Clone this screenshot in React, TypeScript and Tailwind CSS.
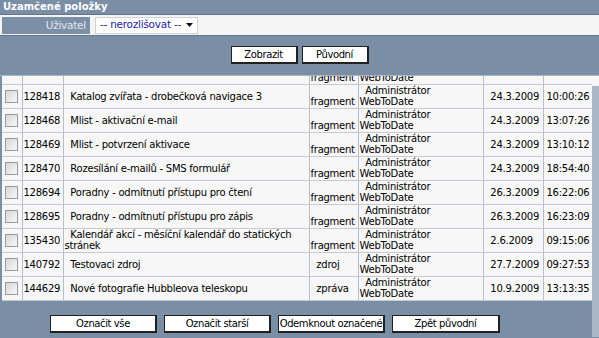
import * as React from "react";

type Row = {
  id: string;
  name: string;
  type: string;
  date: string;
  time: string;
};

const rows: Row[] = [
  { id: "128418", name: "Katalog zvířata - drobečková navigace 3", type: "fragment", date: "24.3.2009", time: "10:00:26" },
  { id: "128468", name: "Mlist - aktivační e-mail", type: "fragment", date: "24.3.2009", time: "13:07:26" },
  { id: "128469", name: "Mlist - potvrzení aktivace", type: "fragment", date: "24.3.2009", time: "13:10:12" },
  { id: "128470", name: "Rozesílání e-mailů - SMS formulář", type: "fragment", date: "24.3.2009", time: "18:54:40" },
  { id: "128694", name: "Poradny - odmítnutí přístupu pro čtení", type: "fragment", date: "26.3.2009", time: "16:22:06" },
  { id: "128695", name: "Poradny - odmítnutí přístupu pro zápis", type: "fragment", date: "26.3.2009", time: "16:23:09" },
  { id: "135430", name: "Kalendář akcí - měsíční kalendář do statických stránek", type: "fragment", date: "2.6.2009", time: "09:15:06" },
  { id: "140792", name: "Testovaci zdroj", type: "zdroj", date: "27.7.2009", time: "09:27:53" },
  { id: "144629", name: "Nové fotografie Hubbleova teleskopu", type: "zpráva", date: "10.9.2009", time: "13:13:35" },
];

const td = "border-l border-b border-l-[#b3bfcd] border-b-[#c6cacf] align-middle p-0";

function Checkbox() {
  return (
    <span className="mx-auto block h-[13px] w-[13px] border border-[#9a9a9a] bg-gradient-to-br from-[#d6d6d6] to-[#fafafa]" />
  );
}

function Button({ children, className }: { children: React.ReactNode; className: string }) {
  return (
    <button
      className={
        "h-[18px] whitespace-nowrap border border-[#202020] border-r-2 border-b-2 bg-white text-[10px] leading-none tracking-[-0.4px] text-black " +
        className
      }
    >
      {children}
    </button>
  );
}

function TableRow({ row, hidden }: { row: Row; hidden?: boolean }) {
  return (
    <tr className="h-[24px] bg-[#f7f7f7] leading-[11px]">
      <td className={td + " border-l-0"}>{hidden ? null : <Checkbox />}</td>
      <td className={td + " pl-px"}>{row.id}</td>
      <td className={td + " pl-px"}>{row.name ? "\u00a0 " + row.name : ""}</td>
      <td className={td + " pl-px"}>{"\u00a0 " + row.type}</td>
      <td className={td + " pl-px"}>{"\u00a0 Administrátor WebToDate"}</td>
      <td className={td + " pl-px"}>{row.date ? "\u00a0 " + row.date : ""}</td>
      <td className={td + " pl-[3px]"}>{row.time}</td>
    </tr>
  );
}

export default function App() {
  return (
    <div className="h-[338px] w-[599px] overflow-hidden bg-[#7a8ea6] font-['DejaVu_Sans',sans-serif] text-[10px] tracking-[-0.25px] text-black">
      <div className="h-[15px] border-b border-[#62748c] pl-[3px] text-[10px] font-bold leading-[14px] tracking-normal text-white">
        Uzamčené položky
      </div>

      <div className="flex h-[20px] items-center bg-[#f5f5f5] pl-[2px]">
        <div className="h-[17px] w-[88px] bg-[#7b8fa7] pr-[4px] text-right text-[10.5px] leading-[17px] text-[#e3e8ee]">
          Uživatel
        </div>
        <div className="ml-[5px] flex h-[17px] w-[103px] items-center justify-between border border-[#cfd3d9] bg-white pl-[4px] pr-[4px] text-[10.5px] text-[#1c1ca8]">
          <span>-- nerozlišovat --</span>
          <svg width="7" height="4" viewBox="0 0 7 4">
            <path d="M0 0h7L3.5 4z" fill="#111" />
          </svg>
        </div>
      </div>

      <div className="flex h-[41px] justify-center gap-[4px] border-t border-b border-t-[#62748c] border-b-[#a9b6c6] pt-[10px]">
        <Button className="w-[67px]">Zobrazit</Button>
        <Button className="w-[67px]">Původní</Button>
      </div>

      <div className="flex h-[261px]">
        <div className="flex w-[592px] flex-col">
          <div className="h-[225px] overflow-hidden pl-[2px]">
            <table className="-mt-[16px] w-[590px] table-fixed border-collapse">
              <colgroup>
                <col className="w-[20px]" />
                <col className="w-[41px]" />
                <col className="w-[246px]" />
                <col className="w-[49px]" />
                <col className="w-[125px]" />
                <col className="w-[60px]" />
                <col className="w-[49px]" />
              </colgroup>
              <tbody>
                <TableRow row={{ id: "", name: "", type: "fragment", date: "", time: "" }} hidden />
                {rows.map((row) => (
                  <TableRow key={row.id} row={row} />
                ))}
              </tbody>
            </table>
          </div>
          <div className="flex gap-[7px] pl-[50px] pt-[14px]">
            <Button className="w-[107px]">Označit vše</Button>
            <Button className="w-[107px]">Označit starší</Button>
            <Button className="w-[107px]">Odemknout označené</Button>
            <Button className="w-[108px]">Zpět původní</Button>
          </div>
        </div>
        <div className="flex w-[7px] flex-col">
          <div className="h-[10px] bg-[#f7f7f7]" />
          <div className="flex-1 bg-[#a9b6c6]" />
        </div>
      </div>
    </div>
  );
}
